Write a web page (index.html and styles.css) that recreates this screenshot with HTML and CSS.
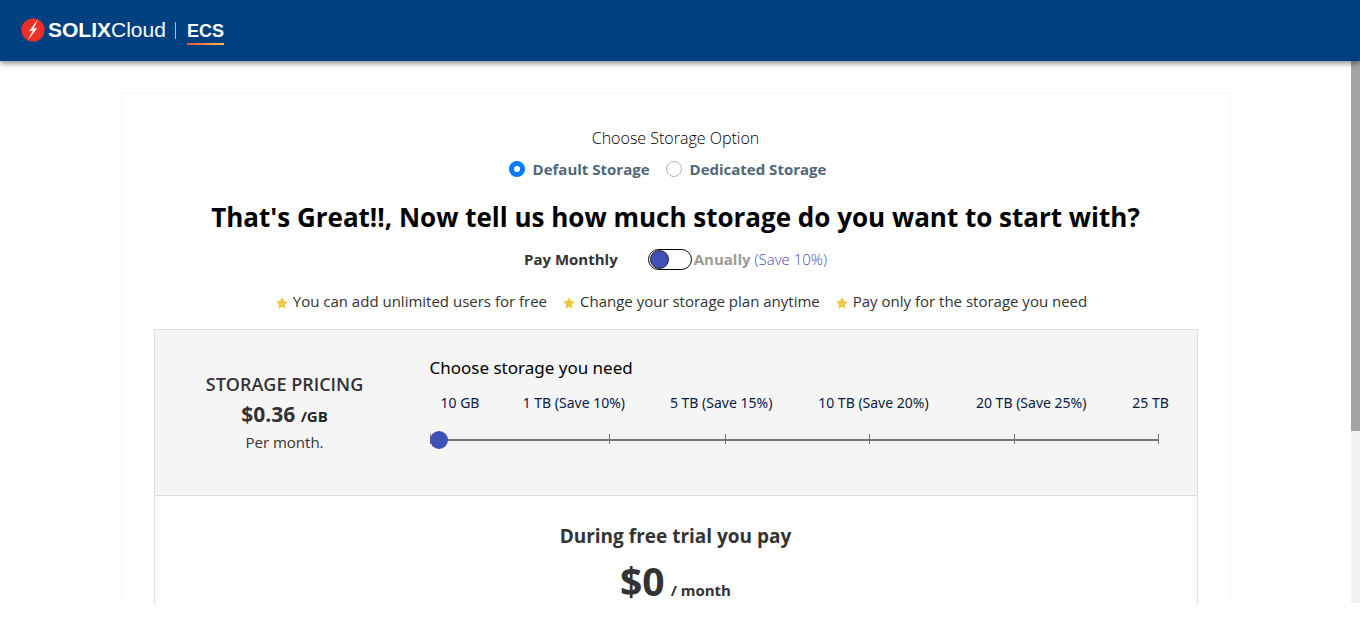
FILE: index.html
```html
<!DOCTYPE html>
<html lang="en">
<head>
<meta charset="utf-8">
<title>SOLIXCloud ECS</title>
<meta name="viewport" content="width=device-width, initial-scale=1">
<link rel="stylesheet" href="styles.css">
</head>
<body>
<header class="topbar">
  <a class="brand" href="#">
    <svg class="brand-mark" viewBox="0 0 24 24" aria-hidden="true">
      <circle cx="12" cy="12" r="11.6" fill="#ee3128"/>
      <path d="M17 1 8 13.400 11.900 12.300 6.800 22.400 16.400 9.800 12.600 10.900Z" fill="#fff"/>
    </svg>
    <span class="brand-name"><b>SOLIX</b>Cloud</span>
    <span class="brand-divider"></span>
    <span class="brand-product">ECS</span>
  </a>
</header>
<div class="viewport">
  <main class="scroll-area">
    <section class="card">
      <form class="plan-form">
        <fieldset class="storage-type">
          <legend class="storage-legend">Choose Storage Option</legend>
          <div class="radio-row">
            <label class="radio"><input type="radio" name="storage" checked>Default Storage</label>
            <label class="radio"><input type="radio" name="storage">Dedicated Storage</label>
          </div>
        </fieldset>
        <h1 class="headline">That's Great!!, Now tell us how much storage do you want to start with?</h1>
        <div class="billing">
          <label class="billing-monthly" for="billing">Pay Monthly</label>
          <input class="switch" type="checkbox" role="switch" id="billing">
          <label class="billing-annual" for="billing">Anually <span class="billing-save">(Save 10%)</span></label>
        </div>
        <ul class="perks">
          <li class="perk"><svg class="star" viewBox="0 0 24 24" aria-hidden="true"><path d="M12 0l3.7 7.9 8.3 1.1-6.1 6 1.6 8.7L12 19.5l-7.5 4.2L6.100 15 0 9l8.300-1.100z"/></svg>You can add unlimited users for free</li>
          <li class="perk"><svg class="star" viewBox="0 0 24 24" aria-hidden="true"><path d="M12 0l3.7 7.9 8.3 1.1-6.1 6 1.6 8.7L12 19.5l-7.5 4.2L6.100 15 0 9l8.300-1.100z"/></svg>Change your storage plan anytime</li>
          <li class="perk"><svg class="star" viewBox="0 0 24 24" aria-hidden="true"><path d="M12 0l3.7 7.9 8.3 1.1-6.1 6 1.6 8.7L12 19.5l-7.5 4.2L6.100 15 0 9l8.300-1.100z"/></svg>Pay only for the storage you need</li>
        </ul>
        <div class="panel">
          <div class="pricing">
            <div class="price">
              <h2 class="price-title">STORAGE PRICING</h2>
              <p class="price-value">$0.36 <span class="price-unit">/GB</span></p>
              <p class="price-period">Per month.</p>
            </div>
            <div class="amount">
              <label class="amount-title" for="amount">Choose storage you need</label>
              <div class="amount-labels">
                <span>10 GB</span><span>1 TB (Save 10%)</span><span>5 TB (Save 15%)</span><span>10 TB (Save 20%)</span><span>20 TB (Save 25%)</span><span>25 TB</span>
              </div>
              <div class="slider">
                <div class="ticks"><i></i><i></i><i></i><i></i><i></i></div>
                <input class="range" id="amount" type="range" min="0" max="25" value="0">
              </div>
            </div>
          </div>
          <div class="trial">
            <h2 class="trial-title">During free trial you pay</h2>
            <p class="trial-price"><span>$0</span><span class="trial-unit">/ month</span></p>
          </div>
        </div>
      </form>
    </section>
  </main>
  <div class="scrollbar" aria-hidden="true"><div class="scrollbar-thumb"></div></div>
</div>
</body>
</html>
```
FILE: styles.css
```css
* { box-sizing: border-box; }

body {
  margin: 0;
  height: 100vh;
  display: flex;
  flex-direction: column;
  padding-bottom: 19px;
  overflow: hidden;
  background: #fff;
  color: #212529;
  font-family: "Open Sans", "Noto Sans", sans-serif;
  font-size: 15px;
  line-height: 24px;
}

h1, h2, p, ul, fieldset { margin: 0; padding: 0; border: 0; }

/* Header */
.topbar {
  position: relative;
  z-index: 1;
  flex: none;
  padding: 15px 21px 16px;
  background: #004080;
  box-shadow: 0 2px 6px rgba(0, 0, 0, 0.5);
}
.brand {
  display: flex;
  align-items: center;
  height: 30px;
  color: #fff;
  text-decoration: none;
  font-family: "Liberation Sans", Arial, sans-serif;
}
.brand-mark { width: 24px; height: 24px; margin-right: 3px; }
.brand-name { font-size: 21px; }
.brand-divider { width: 1px; height: 17px; margin: 0 11px 0 9px; background: #a9bfd5; }
.brand-product {
  padding-top: 3px;
  font-size: 18px;
  font-weight: 700;
  line-height: 24px;
  border-bottom: 2px solid;
  border-image: linear-gradient(90deg, #f04a3a, #fbc34d) 1;
}

/* Scrolling page */
.viewport { flex: 1; min-height: 0; display: flex; }
.scroll-area { flex: 1; overflow-y: auto; scrollbar-width: none; padding: 32px 16px; }
.scrollbar { width: 9px; background: #f1f1f1; }
.scrollbar-thumb { height: 68.3%; background: #a4a4a4; }

.card {
  max-width: 1110px;
  margin: 0 auto;
  padding: 32px 32px 160px;
  border: 1px solid #f4f4f4;
}
.plan-form { display: flex; flex-direction: column; text-align: center; }

.storage-legend { width: 100%; padding: 0; font-size: 16px; font-weight: 300; color: #000; }
.radio-row { display: flex; justify-content: center; gap: 16px; padding: 7px 16px 0 0; }
.radio { display: flex; align-items: center; gap: 8px; font-weight: 700; color: #516679; }
.radio input {
  appearance: none;
  width: 16px;
  height: 16px;
  margin: 0;
  border: 1px solid #adb5bd;
  border-radius: 50%;
  background: #fff;
}
.radio input:checked { border: 5px solid #007bff; }

.headline { padding-top: 17px; font-size: 26px; line-height: 38px; font-weight: 700; color: #000; }

.billing { display: flex; justify-content: center; align-items: center; padding-top: 11px; }
.billing-monthly { margin-right: 30px; font-weight: 700; color: #333; }
.switch {
  appearance: none;
  display: flex;
  align-items: center;
  width: 44px;
  height: 21px;
  margin: 0 2px 0 0;
  padding: 0 1px;
  border: 1px solid #000;
  border-radius: 11px;
}
.switch::before {
  content: "";
  width: 17px;
  height: 17px;
  border: 1px solid #222;
  border-radius: 50%;
  background: #3f51b5;
}
.switch:checked::before { margin-left: auto; }
.billing-annual { font-weight: 700; color: #9b9b93; }
.billing-save { font-weight: 300; color: #3f51b5; }

.perks {
  display: flex;
  justify-content: center;
  gap: 16px;
  padding: 18px 0 16px 12px;
  list-style: none;
  color: #333;
}
.perk { display: flex; align-items: center; gap: 5px; }
.star { width: 12px; height: 12px; margin-top: 3px; fill: #f0c746; }

/* Pricing panel */
.panel { border: 1px solid #dedede; }
.pricing {
  display: grid;
  grid-template-columns: 260px 1fr;
  padding: 26px 27px 43px 0;
  background: #f5f5f5;
  border-bottom: 1px solid #dedede;
}
.price { padding-top: 14px; color: #333; }
.price-title { font-size: 18px; line-height: 28px; font-weight: 600; }
.price-value { font-size: 21px; line-height: 32px; font-weight: 700; }
.price-unit { font-size: 15px; color: #212529; }
.price-period { line-height: 20px; }

.amount { padding-left: 15px; text-align: left; font-family: "Noto Sans", "Open Sans", sans-serif; }
.amount-title { display: block; font-size: 17px; color: #000; }
.amount-labels {
  display: grid;
  grid-template-columns: 38fr 105fr 106fr 115fr 117fr 38fr;
  column-gap: 42px;
  padding: 11px 0 0 11px;
  font-size: 14px;
  text-align: center;
  white-space: nowrap;
  color: #0b1b3f;
}
.slider { display: grid; align-items: center; margin: 16px 11px 0 0; }
.ticks, .range { grid-area: 1 / 1; }
.ticks {
  display: grid;
  grid-template-columns: 180fr 116fr 144fr 145fr 144fr;
  height: 10px;
  margin-bottom: 3px;
  border-right: 1px solid #757575;
}
.ticks i { border-left: 1px solid #757575; }
.range {
  appearance: none;
  width: 100%;
  height: 18px;
  margin: 0;
  background: linear-gradient(#757575, #757575) center / 100% 2px no-repeat;
}
.range::-webkit-slider-thumb {
  appearance: none;
  width: 18px;
  height: 18px;
  border-radius: 50%;
  background: #3f51b5;
}

.trial { padding: 26px 0 32px; color: #333; }
.trial-title { font-size: 19px; line-height: 28px; font-weight: 700; }
.trial-price {
  display: flex;
  justify-content: center;
  align-items: baseline;
  gap: 6px;
  font-size: 39px;
  line-height: 62px;
  font-weight: 700;
}
.trial-unit { font-size: 15px; }
```
